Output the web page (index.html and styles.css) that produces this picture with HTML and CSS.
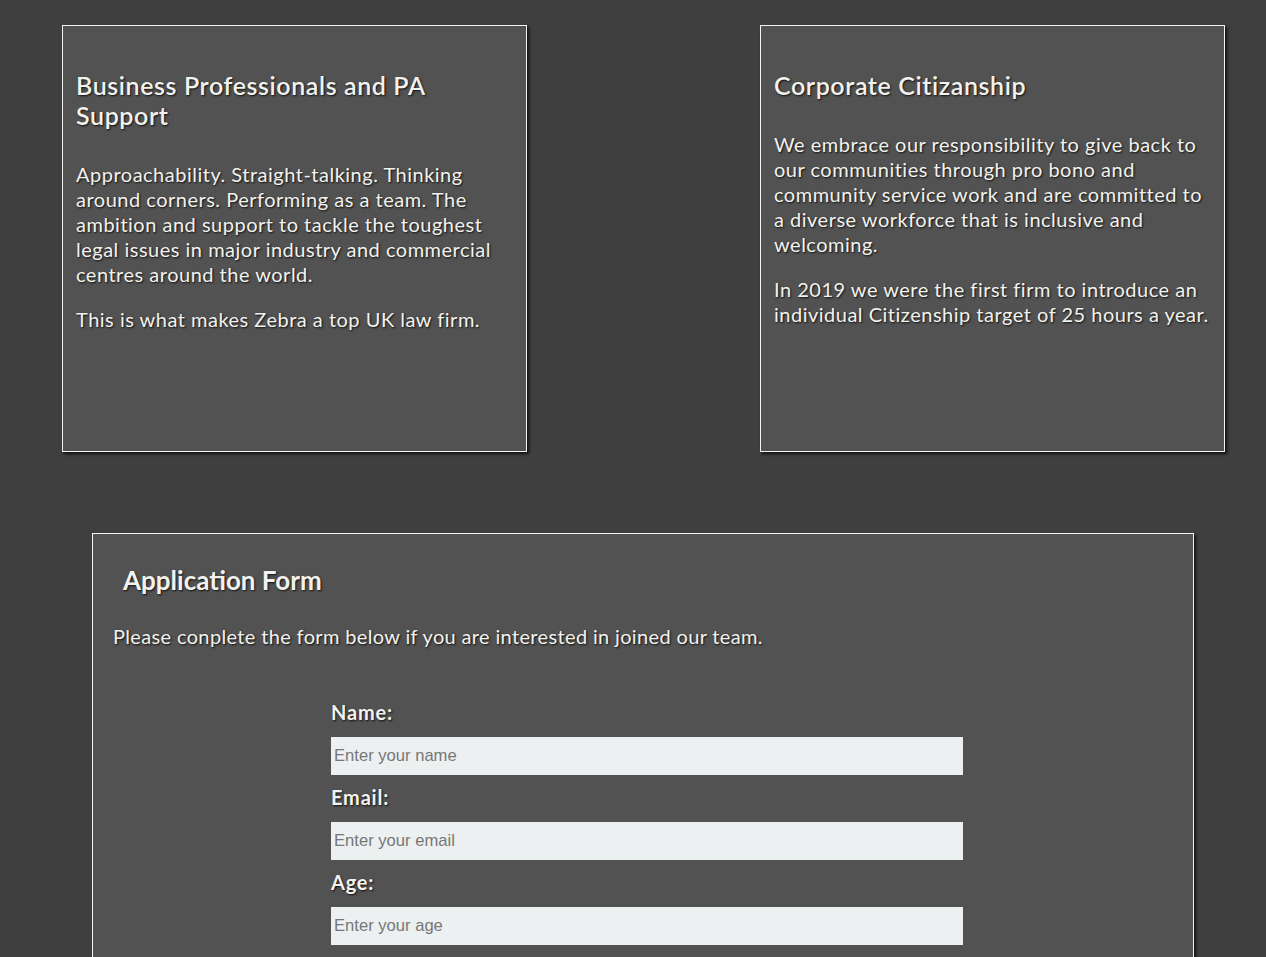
FILE: index.html
```html
<!DOCTYPE html>
<html lang="en">
<head>
<meta charset="utf-8">
<title>Careers - Zebra</title>
<link rel="stylesheet" href="styles.css">
</head>
<body>
<main class="page">
  <section class="cards">
    <article class="card">
      <h2 class="card-title">Business Professionals and PA Support</h2>
      <p class="card-text">Approachability. Straight-talking. Thinking around corners. Performing as a team. The ambition and support to tackle the toughest legal issues in major industry and commercial centres around the world.</p>
      <p class="card-text">This is what makes Zebra a top UK law firm.</p>
    </article>
    <article class="card">
      <h2 class="card-title">Corporate Citizanship</h2>
      <p class="card-text">We embrace our responsibility to give back to our communities through pro bono and community service work and are committed to a diverse workforce that is inclusive and welcoming.</p>
      <p class="card-text">In 2019 we were the first firm to introduce an individual Citizenship target of 25 hours a year.</p>
    </article>
  </section>
  <section class="apply">
    <h2 class="apply-title">Application Form</h2>
    <p class="apply-intro">Please conplete the form below if you are interested in joined our team.</p>
    <form class="apply-form">
      <label class="field-label" for="name">Name:</label>
      <input class="field-input" id="name" type="text" placeholder="Enter your name">
      <label class="field-label" for="email">Email:</label>
      <input class="field-input" id="email" type="email" placeholder="Enter your email">
      <label class="field-label" for="age">Age:</label>
      <input class="field-input" id="age" type="text" placeholder="Enter your age">
    </form>
  </section>
</main>
</body>
</html>
```
FILE: styles.css
```css
html, body {
  margin: 0;
  padding: 0;
  background: #3f3f3f;
}

body {
  font-family: Lato, "Open Sans", sans-serif;
  color: #f2f2ee;
  overflow: hidden;
}

.page {
  padding-top: 25px;
}

.cards {
  display: flex;
  justify-content: space-between;
  padding: 0 41px 0 62px;
}

.card {
  box-sizing: border-box;
  width: 465px;
  height: 427px;
  background: #525252;
  border: 1px solid #f4f4f4;
  box-shadow: 2px 2px 3px rgba(0, 0, 0, 0.75);
  padding: 0 13px;
  text-shadow: 1px 1px 2px #111;
}

.card-title {
  font-size: 25px;
  font-weight: 600;
  line-height: 30px;
  letter-spacing: 0.6px;
  margin: 44px 0 32px;
}

.card-text {
  font-size: 20px;
  line-height: 25px;
  letter-spacing: 0.5px;
  margin: 0 0 20px;
}

.apply {
  box-sizing: border-box;
  width: 1102px;
  margin: 81px 0 0 92px;
  height: 500px;
  background: #525252;
  border: 1px solid #f4f4f4;
  box-shadow: 2px 2px 3px rgba(0, 0, 0, 0.75);
  text-shadow: 1px 1px 2px #111;
  padding: 0 20px;
}

.apply-title {
  font-size: 26px;
  font-weight: 700;
  line-height: 32px;
  margin: 30px 0 28px 10px;
}

.apply-intro {
  font-size: 20px;
  line-height: 25px;
  letter-spacing: 0.35px;
  margin: 0 0 51px;
}

.apply-form {
  display: flex;
  flex-direction: column;
  width: 632px;
  margin-left: 218px;
}

.field-label {
  font-size: 20px;
  font-weight: 700;
  line-height: 25px;
  letter-spacing: 0.8px;
  margin-bottom: 12px;
}

.field-input {
  box-sizing: border-box;
  height: 38px;
  border: none;
  background: #ecf0f1;
  font-family: "Liberation Sans", Arial, sans-serif;
  font-size: 16.6px;
  padding: 0 3px;
  margin: 0 0 10px;
  color: #333;
}

.field-input::placeholder {
  color: #777;
}
```
